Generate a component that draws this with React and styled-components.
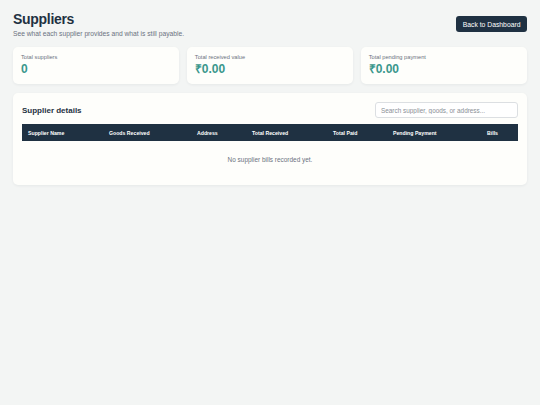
import React from 'react';
import styled, { createGlobalStyle } from 'styled-components';

const GlobalStyle = createGlobalStyle`
  html, body {
    margin: 0;
    padding: 0;
    background: #f3f5f4;
    font-family: "Liberation Sans", Arial, sans-serif;
    color: #1f3142;
  }
  * {
    box-sizing: border-box;
  }
`;

const Page = styled.div`
  padding: 11px 13px 20px;
  min-height: 405px;
`;

const Header = styled.header`
  display: flex;
  align-items: center;
  justify-content: space-between;
  margin-bottom: 9.5px;
`;

const Title = styled.h1`
  margin: 0;
  font-size: 14px;
  line-height: 17px;
  font-weight: bold;
  letter-spacing: -0.3px;
  color: #1f3142;
`;

const Subtitle = styled.p`
  margin: 0.5px 0 0;
  font-size: 6.7px;
  line-height: 9px;
  color: #6b7280;
`;

const BackButton = styled.button`
  height: 16px;
  padding: 0 6.5px;
  border: none;
  border-radius: 3px;
  background: #1f3142;
  color: #ffffff;
  font-family: inherit;
  font-size: 6.8px;
  cursor: pointer;
`;

const Stats = styled.div`
  display: grid;
  grid-template-columns: repeat(3, 1fr);
  gap: 7.5px;
  margin-bottom: 9px;
`;

const Card = styled.div`
  background: #fefefb;
  border-radius: 5px;
  box-shadow: 0 1px 3px rgba(20, 40, 50, 0.06);
  padding: ${({ $pad }) => $pad || '7px 8px 8px'};
`;

const StatLabel = styled.div`
  font-size: 5.7px;
  line-height: 7px;
  color: #6b7280;
`;

const StatValue = styled.div`
  margin-top: 1px;
  font-size: 12px;
  line-height: 14px;
  font-weight: bold;
  color: #3a978c;
`;

const PanelTop = styled.div`
  display: flex;
  align-items: center;
  justify-content: space-between;
  margin-bottom: 6px;
`;

const PanelTitle = styled.h2`
  margin: 0;
  font-size: 8px;
  font-weight: bold;
  color: #1f3142;
`;

const Search = styled.input`
  width: 143px;
  height: 16px;
  padding: 0 5px;
  border: 1px solid #dcdfe2;
  border-radius: 3px;
  background: #ffffff;
  font-family: inherit;
  font-size: 6.4px;
  color: #1f3142;
  outline: none;

  &::placeholder {
    color: #8a8f96;
  }
`;

const Table = styled.table`
  width: 100%;
  border-collapse: collapse;
  table-layout: fixed;
`;

const Th = styled.th`
  height: 17px;
  padding: 0 6px;
  background: #1f3142;
  color: #ffffff;
  font-size: 5.2px;
  font-weight: bold;
  text-align: left;
  white-space: nowrap;
`;

const EmptyCell = styled.td`
  padding: 15px 0 12px;
  text-align: center;
  font-size: 6.45px;
  line-height: 8px;
  color: #6b7280;
`;

const columns = [
  { label: 'Supplier Name', width: 81 },
  { label: 'Goods Received', width: 88 },
  { label: 'Address', width: 55 },
  { label: 'Total Received', width: 81 },
  { label: 'Total Paid', width: 60 },
  { label: 'Pending Payment', width: 94 },
  { label: 'Bills', width: 37 },
];

const stats = [
  { label: 'Total suppliers', value: '0' },
  { label: 'Total received value', value: '₹0.00' },
  { label: 'Total pending payment', value: '₹0.00' },
];

export default function App() {
  return (
    <>
      <GlobalStyle />
      <Page>
        <Header>
          <div>
            <Title>Suppliers</Title>
            <Subtitle>See what each supplier provides and what is still payable.</Subtitle>
          </div>
          <BackButton>Back to Dashboard</BackButton>
        </Header>

        <Stats>
          {stats.map(s => (
            <Card key={s.label}>
              <StatLabel>{s.label}</StatLabel>
              <StatValue>{s.value}</StatValue>
            </Card>
          ))}
        </Stats>

        <Card $pad="9px 9px 9px">
          <PanelTop>
            <PanelTitle>Supplier details</PanelTitle>
            <Search placeholder="Search supplier, goods, or address..." />
          </PanelTop>
          <Table>
            <colgroup>
              {columns.map(c => (
                <col key={c.label} style={{ width: c.width }} />
              ))}
            </colgroup>
            <thead>
              <tr>
                {columns.map(c => (
                  <Th key={c.label}>{c.label}</Th>
                ))}
              </tr>
            </thead>
            <tbody>
              <tr>
                <EmptyCell colSpan={columns.length}>No supplier bills recorded yet.</EmptyCell>
              </tr>
            </tbody>
          </Table>
        </Card>
      </Page>
    </>
  );
}
